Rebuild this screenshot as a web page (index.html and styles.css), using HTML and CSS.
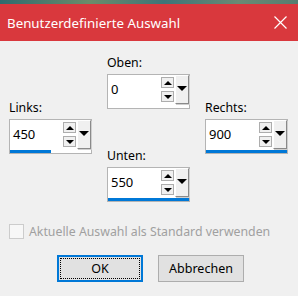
FILE: index.html
```html
<!DOCTYPE html>
<html lang="de">
<head>
    <meta charset="UTF-8">
    <title>Benutzerdefinierte Auswahl</title>
    <link rel="stylesheet" href="styles.css">
</head>
<body>
    <div class="desktop"></div>
    <div class="titlebar">
        <span class="title">Benutzerdefinierte Auswahl</span>
        <svg class="close" width="13" height="13" viewBox="0 0 13 13">
            <path d="M0.5 0.5 L12.5 12.5 M12.5 0.5 L0.5 12.5" stroke="#fff" stroke-width="1.2" fill="none"/>
        </svg>
    </div>

    <div class="dialog">
        <div class="fields">
            <div class="col col-side">
                <div class="field">
                    <label>Links:</label>
                    <div class="spin">
                        <div class="spin-row">
                            <span class="value">450</span>
                            <div class="arrows">
                                <span class="arrow up"></span>
                                <span class="arrow down"></span>
                            </div>
                            <span class="drop"></span>
                        </div>
                        <div class="bar" style="width: 41px"></div>
                    </div>
                </div>
            </div>

            <div class="col col-mid">
                <div class="field">
                    <label>Oben:</label>
                    <div class="spin">
                        <div class="spin-row">
                            <span class="value">0</span>
                            <div class="arrows">
                                <span class="arrow up"></span>
                                <span class="arrow down"></span>
                            </div>
                            <span class="drop"></span>
                        </div>
                        <div class="bar" style="width: 0"></div>
                    </div>
                </div>
                <div class="field field-bottom">
                    <label>Unten:</label>
                    <div class="spin">
                        <div class="spin-row">
                            <span class="value">550</span>
                            <div class="arrows">
                                <span class="arrow up"></span>
                                <span class="arrow down"></span>
                            </div>
                            <span class="drop"></span>
                        </div>
                        <div class="bar" style="width: 100%"></div>
                    </div>
                </div>
            </div>

            <div class="col col-side">
                <div class="field">
                    <label>Rechts:</label>
                    <div class="spin">
                        <div class="spin-row">
                            <span class="value">900</span>
                            <div class="arrows">
                                <span class="arrow up"></span>
                                <span class="arrow down"></span>
                            </div>
                            <span class="drop"></span>
                        </div>
                        <div class="bar" style="width: 100%"></div>
                    </div>
                </div>
            </div>
        </div>

        <div class="check-row">
            <span class="checkbox"></span>
            <span class="check-label">Aktuelle Auswahl als Standard verwenden</span>
        </div>

        <div class="buttons">
            <button class="btn btn-default"><span class="focus">OK</span></button>
            <button class="btn">Abbrechen</button>
        </div>
    </div>
</body>
</html>
```

FILE: styles.css
```css
body {
    margin: 0;
    width: 298px;
    height: 296px;
    overflow: hidden;
    background-color: #f0f0f0;
    font-family: "Noto Sans", "Open Sans", sans-serif;
    font-size: 12.3px;
    color: #000;
}
.desktop {
    height: 4px;
    background: linear-gradient(90deg, #2f6a6e 0%, #6b8c6a 30%, #3d7478 55%, #6a8a74 80%, #557d70 100%);
}
.titlebar {
    height: 37px;
    background-color: #d9383d;
    display: flex;
    align-items: center;
    justify-content: space-between;
    padding: 0 11px 0 7px;
}
.title {
    color: #fff;
    font-size: 13.3px;
}
.close {
    display: block;
}
.fields {
    display: flex;
    gap: 15px;
    padding-left: 9px;
}
.col {
    width: 83px;
}
.col-side {
    padding-top: 59px;
}
.col-mid {
    padding-top: 14px;
}
.field label {
    display: block;
    height: 16px;
    line-height: 16px;
    margin-bottom: 3px;
}
.field-bottom {
    margin-top: 39px;
}
.spin {
    height: 33px;
    border: 1px solid #b4b4b4;
    background-color: #fff;
}
.spin-row {
    display: flex;
    height: 29px;
    margin-bottom: 1px;
}
.value {
    width: 50px;
    padding-left: 3px;
    line-height: 29px;
    font-size: 13px;
}
.arrows {
    width: 13px;
    padding-top: 2px;
    display: flex;
    flex-direction: column;
    gap: 3px;
}
.arrow {
    height: 9px;
    border: 1px solid #adadad;
    background-color: #f0f0f0;
    display: flex;
    align-items: center;
    justify-content: center;
}
.arrow::after {
    content: "";
    border-left: 4px solid transparent;
    border-right: 4px solid transparent;
}
.arrow.up::after {
    border-bottom: 4px solid #000;
}
.arrow.down::after {
    border-top: 4px solid #000;
}
.drop {
    width: 12px;
    margin-left: 1px;
    background-color: #f0f0f0;
    border-top: 1px solid #fff;
    border-left: 1px solid #fff;
    border-right: 1px solid #8a8a8a;
    border-bottom: 1px solid #8a8a8a;
    box-shadow: 1px 1px 0 #cfcfcf;
    display: flex;
    align-items: center;
    justify-content: center;
}
.drop::after {
    content: "";
    margin-top: -3px;
    border-left: 5px solid transparent;
    border-right: 5px solid transparent;
    border-top: 5px solid #000;
}
.bar {
    height: 3px;
    background-color: #0078d7;
}
.check-row {
    display: flex;
    align-items: center;
    gap: 5px;
    margin-top: 21px;
    padding-left: 9px;
    height: 16px;
}
.checkbox {
    width: 13px;
    height: 13px;
    border: 1px solid #cccccc;
    background-color: #f7f7f7;
}
.check-label {
    color: #a0a0a0;
}
.buttons {
    display: flex;
    gap: 15px;
    margin-top: 16px;
    padding-left: 57px;
}
.btn {
    width: 86px;
    height: 27px;
    font-family: inherit;
    font-size: 12.5px;
    color: #000;
    background-color: #e1e1e1;
    border: 1px solid #adadad;
    padding: 0;
}
.btn-default {
    border: 2px solid #0078d7;
    padding: 1px;
}
.btn-default .focus {
    display: flex;
    align-items: center;
    justify-content: center;
    height: 100%;
    box-sizing: border-box;
    border: 1px dotted #000;
}
```
